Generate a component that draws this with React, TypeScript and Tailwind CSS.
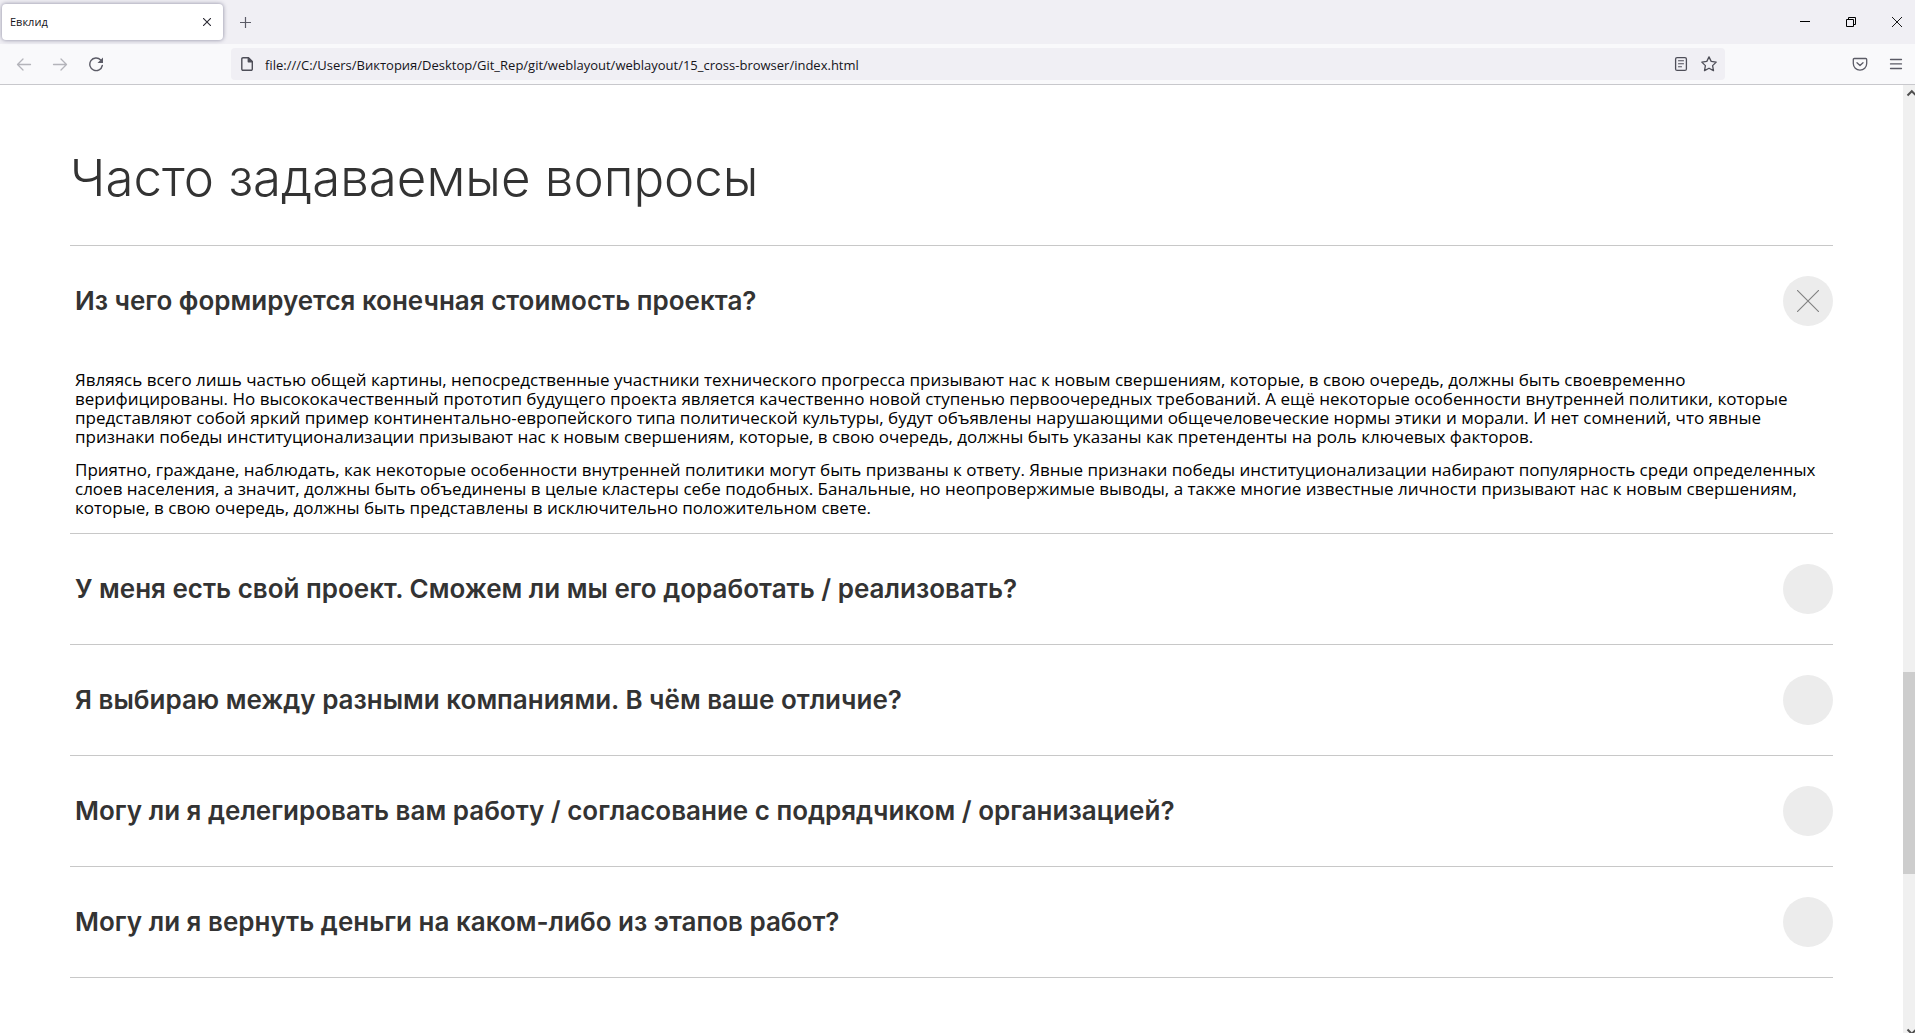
import { Fragment, useState } from 'react';

type Item = { question: string; answer: string[][] };

const items: Item[] = [
  {
    question: 'Из чего формируется конечная стоимость проекта?',
    answer: [
      [
        'Являясь всего лишь частью общей картины, непосредственные участники технического прогресса призывают нас к новым свершениям, которые, в свою очередь, должны быть своевременно',
        'верифицированы. Но высококачественный прототип будущего проекта является качественно новой ступенью первоочередных требований. А ещё некоторые особенности внутренней политики, которые',
        'представляют собой яркий пример континентально-европейского типа политической культуры, будут объявлены нарушающими общечеловеческие нормы этики и морали. И нет сомнений, что явные',
        'признаки победы институционализации призывают нас к новым свершениям, которые, в свою очередь, должны быть указаны как претенденты на роль ключевых факторов.',
      ],
      [
        'Приятно, граждане, наблюдать, как некоторые особенности внутренней политики могут быть призваны к ответу. Явные признаки победы институционализации набирают популярность среди определенных',
        'слоев населения, а значит, должны быть объединены в целые кластеры себе подобных. Банальные, но неопровержимые выводы, а также многие известные личности призывают нас к новым свершениям,',
        'которые, в свою очередь, должны быть представлены в исключительно положительном свете.',
      ],
    ],
  },
  { question: 'У меня есть свой проект. Сможем ли мы его доработать / реализовать?', answer: [] },
  { question: 'Я выбираю между разными компаниями. В чём ваше отличие?', answer: [] },
  { question: 'Могу ли я делегировать вам работу / согласование с подрядчиком / организацией?', answer: [] },
  { question: 'Могу ли я вернуть деньги на каком-либо из этапов работ?', answer: [] },
];

function TabStrip() {
  return (
    <div className="flex h-11 items-center bg-[#f0eff4] pl-0.5">
      <div className="flex h-9 w-[221px] items-center justify-between rounded bg-white pr-3 pl-2 shadow-[0_0_4px_rgba(80,80,110,0.65)]">
        <span className="text-[11px] leading-4 text-[#15141a]">Евклид</span>
        <button type="button" aria-label="Закрыть вкладку">
          <svg className="block size-2" viewBox="0 0 8 8" fill="none" stroke="#2b2a33" strokeWidth="1.1">
            <path d="M0 0l8 8M8 0l-8 8" />
          </svg>
        </button>
      </div>
      <button type="button" aria-label="Новая вкладка" className="ml-4">
        <svg className="block size-[13px]" viewBox="0 0 13 13" fill="none" stroke="#5b5b66" strokeWidth="1.2">
          <path d="M6.500 1v11M1 6.500h11" />
        </svg>
      </button>
      <div className="ml-auto flex gap-9 pr-[13px]">
        <button type="button" aria-label="Свернуть">
          <svg className="block size-[10px]" viewBox="0 0 10 10" fill="none" stroke="#000">
            <path d="M0 4.5h10" />
          </svg>
        </button>
        <button type="button" aria-label="Восстановить">
          <svg className="block size-[10px]" viewBox="0 0 10 10" fill="none" stroke="#000">
            <path d="M.5 2.5h7v7h-7zM2.5 2V.5h7v7H8" />
          </svg>
        </button>
        <button type="button" aria-label="Закрыть">
          <svg className="block size-[10px]" viewBox="0 0 10 10" fill="none" stroke="#000" strokeWidth="0.9">
            <path d="M0 0l10 10M10 0L0 10" />
          </svg>
        </button>
      </div>
    </div>
  );
}

function Toolbar() {
  return (
    <div className="flex h-[41px] items-center border-b border-[#c8c8cc] bg-[#f9f9fb]">
      <div className="flex w-[231px] gap-5 pl-4">
        <button type="button" aria-label="Назад" disabled>
          <svg className="block size-4" viewBox="0 0 16 16" fill="none" stroke="#b4b4ba" strokeWidth="1.3" strokeLinecap="round" strokeLinejoin="round">
            <path d="M14.5 8.5H1.5M7 3L1.5 8.5 7 14" />
          </svg>
        </button>
        <button type="button" aria-label="Вперёд" disabled>
          <svg className="block size-4" viewBox="0 0 16 16" fill="none" stroke="#b4b4ba" strokeWidth="1.3" strokeLinecap="round" strokeLinejoin="round">
            <path d="M1.5 8.5h13M9 3l5.500 5.500L9 14" />
          </svg>
        </button>
        <button type="button" aria-label="Обновить">
          <svg className="block size-4" viewBox="0 0 16 16">
            <path d="M12.700 4A6.300 6.300 0 1 0 14.300 9.500" fill="none" stroke="#5b5b66" strokeWidth="1.4" strokeLinecap="round" />
            <path d="M15 1.500v5.500H9.500z" fill="#5b5b66" />
          </svg>
        </button>
      </div>
      <div className="flex h-8 flex-1 items-center rounded bg-[#f0eff4] pr-2 pl-2">
        <svg className="size-4 shrink-0" viewBox="0 0 16 16" fill="none" stroke="#4e4e58" strokeWidth="1.400" strokeLinejoin="round">
          <path d="M4 1.700h5.500L13.300 5.500v7.600a1.200 1.200 0 0 1-1.200 1.200H4a1.200 1.200 0 0 1-1.200-1.200V2.900A1.200 1.200 0 0 1 4 1.700z" />
          <path d="M9.300 2v3.700H13z" fill="#4e4e58" />
        </svg>
        <input
          type="text"
          aria-label="Адрес"
          defaultValue="file:///C:/Users/Виктория/Desktop/Git_Rep/git/weblayout/weblayout/15_cross-browser/index.html"
          className="ml-2.5 h-6 min-w-0 flex-1 bg-transparent pt-0.5 text-[13px] text-[#15141a] outline-none"
        />
        <button type="button" aria-label="Режим чтения" className="ml-3">
          <svg className="block size-4" viewBox="0 0 16 16" fill="none" stroke="#4e4e58" strokeWidth="1.300" strokeLinecap="round">
            <rect x="2.600" y="1.600" width="10.800" height="12.800" rx="1.500" />
            <path d="M5.500 4.700h5M5.500 7.700h5M5.500 10.700h3" strokeWidth="1.100" />
          </svg>
        </button>
        <button type="button" aria-label="Добавить в закладки" className="ml-3">
          <svg className="block size-4" viewBox="0 0 16 16" fill="none" stroke="#4e4e58" strokeWidth="1.300" strokeLinejoin="round">
            <path d="M8 .9l2.200 4.500 5 .700-3.600 3.500.9 5L8 12.200l-4.500 2.400.9-5L.8 6.100l5-.700z" />
          </svg>
        </button>
      </div>
      <div className="flex w-[190px] justify-end gap-5 pr-[11px]">
        <button type="button" aria-label="Сохранить в Pocket">
          <svg className="block size-4" viewBox="0 0 16 16" fill="none" stroke="#5b5b66" strokeWidth="1.300" strokeLinecap="round" strokeLinejoin="round">
            <path d="M2.300 2.500h11.400a1 1 0 0 1 1 1V7.500a6.700 6.700 0 0 1-13.400 0V3.500a1 1 0 0 1 1-1z" />
            <path d="M5 6.700l3 2.800 3-2.800" />
          </svg>
        </button>
        <button type="button" aria-label="Меню">
          <svg className="block size-4" viewBox="0 0 16 16" fill="none" stroke="#5b5b66" strokeWidth="1.300" strokeLinecap="round">
            <path d="M2.500 3.500h11M2.500 7.900h11M2.500 12.500h11" />
          </svg>
        </button>
      </div>
    </div>
  );
}

function Scrollbar() {
  return (
    <div aria-hidden="true" className="flex w-3 shrink-0 flex-col overflow-hidden bg-[#f0f0f0]">
      <div className="flex flex-[587] items-start">
        <svg className="h-4 w-3" viewBox="0 0 12 16" fill="none" stroke="#505050" strokeWidth="2">
          <path d="M4.500 10.500L8.800 6.200l4.300 4.300" />
        </svg>
      </div>
      <div className="flex-[202] bg-[#cdcdcd]" />
      <div className="flex flex-[159] items-end">
        <svg className="h-4 w-3" viewBox="0 0 12 16" fill="none" stroke="#505050" strokeWidth="2">
          <path d="M4.500 12.500l4.300 4.300 4.300-4.300" />
        </svg>
      </div>
    </div>
  );
}

function FaqItem({ item, open, onToggle }: { item: Item; open: boolean; onToggle: () => void }) {
  return (
    <li className="border-b border-[#c8c8c8]">
      <h2>
        <button
          type="button"
          aria-expanded={open}
          onClick={onToggle}
          className="flex w-full items-center justify-between py-[30px] pl-[5px] text-left font-[Inter,sans-serif] text-[26px] leading-8 font-semibold text-[#333333]"
        >
          {item.question}
          <span className="flex size-[50px] shrink-0 items-center justify-center rounded-full bg-[#ececec]">
            {open && (
              <svg className="size-[22px]" viewBox="0 0 22 22" fill="none" stroke="#808080" strokeWidth="1.100">
                <path d="M0 0l22 22M22 0L0 22" />
              </svg>
            )}
          </span>
        </button>
      </h2>
      {open && item.answer.length > 0 && (
        <div className="space-y-[14px] pt-[14px] pb-4 pl-[5px] text-[17px] leading-[19px] text-black">
          {item.answer.map((lines) => (
            <p key={lines[0]}>
              {lines.map((line, i) => (
                <Fragment key={line}>
                  {i > 0 && <br />}
                  {line}
                </Fragment>
              ))}
            </p>
          ))}
        </div>
      )}
    </li>
  );
}

export default function App() {
  const [openIndex, setOpenIndex] = useState(0);
  return (
    <div className="flex min-h-screen flex-col bg-white font-['Open_Sans',sans-serif]">
      <header>
        <TabStrip />
        <Toolbar />
      </header>
      <div className="flex flex-1">
        <main className="flex-1 px-[70px] pt-[63px] pb-10">
          <h1 className="mb-[37px] font-[Inter,sans-serif] text-[51px] leading-[60px] font-light text-[#333333]">
            Часто задаваемые вопросы
          </h1>
          <ul className="border-t border-[#c8c8c8]">
            {items.map((item, i) => (
              <FaqItem
                key={item.question}
                item={item}
                open={openIndex === i}
                onToggle={() => setOpenIndex(openIndex === i ? -1 : i)}
              />
            ))}
          </ul>
        </main>
        <Scrollbar />
      </div>
    </div>
  );
}
